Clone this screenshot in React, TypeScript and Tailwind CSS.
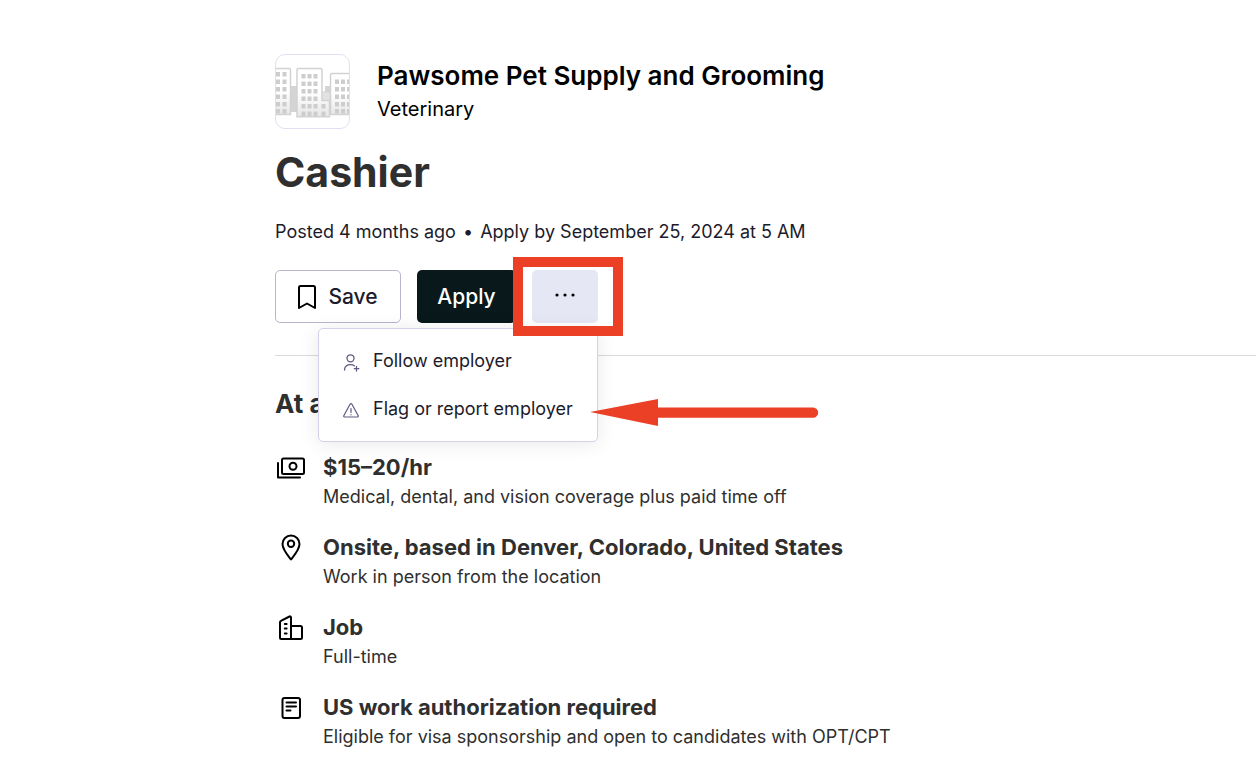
import { useState, type ReactNode } from "react";

const details = [
  { icon: "pay", title: "$15–20/hr", text: "Medical, dental, and vision coverage plus paid time off" },
  { icon: "pin", title: "Onsite, based in Denver, Colorado, United States", text: "Work in person from the location" },
  { icon: "job", title: "Job", text: "Full-time" },
  { icon: "doc", title: "US work authorization required", text: "Eligible for visa sponsorship and open to candidates with OPT/CPT" },
] as const;

const icons: Record<(typeof details)[number]["icon"], ReactNode> = {
  pay: (
    <>
      <rect x="7" y="5.5" width="22" height="15.5" rx="1.5" />
      <circle cx="18" cy="13.2" r="3.5" />
      <path d="M3 10v14.5h22" />
    </>
  ),
  pin: (
    <>
      <path d="M16 26.5C12.5 22 7.5 16.5 7.5 11a8.5 8.5 0 0 1 17 0c0 5.5-5 11-8.5 15.5Z" />
      <circle cx="16" cy="10.7" r="3.2" />
    </>
  ),
  job: (
    <>
      <path d="M5 25V9.2a1.5 1.5 0 0 1 .9-1.400l8.6-4.300a1 1 0 0 1 1.5.9V26H6a1 1 0 0 1-1-1Z" />
      <path d="M16 13h9.5a1.5 1.5 0 0 1 1.5 1.5v10a1.5 1.5 0 0 1-1.500 1.5H16" />
      <path d="M9.800 11h1.800M9.800 15.500h1.800M9.800 20.500h1.800" />
    </>
  ),
  doc: (
    <>
      <rect x="7.5" y="5" width="17.5" height="20" rx="2" />
      <path d="M11.500 9.500h9.500M11.500 13.500h9.500M11.500 17.500h4" />
    </>
  ),
};

function DetailIcon({ name }: { name: keyof typeof icons }) {
  return (
    <svg className="h-[30px] w-8 shrink-0 text-black" viewBox="0 0 32 30" fill="none" stroke="currentColor" strokeWidth="2" strokeLinejoin="round" strokeLinecap="round" aria-hidden="true">
      {icons[name]}
    </svg>
  );
}

function Windows({ xs, ys }: { xs: number[]; ys: number[] }) {
  return (
    <g fill="#cdcdcd">
      {ys.map((y) => xs.map((x) => <rect key={`${x}-${y}`} x={x} y={y} width="4" height="4.5" />))}
    </g>
  );
}

function EmployerLogo() {
  return (
    <div className="size-[75px] shrink-0 overflow-hidden rounded-[10px] border border-[#e0e0f2] bg-white">
      <svg className="size-full" viewBox="1 1 73 73" role="img" aria-label="Employer logo">
        <defs>
          <linearGradient id="wall" x1="0" y1="0" x2="0" y2="1">
            <stop offset="0.5" stopColor="#fff" />
            <stop offset="1" stopColor="#e6e6e6" />
          </linearGradient>
        </defs>
        <path d="M15 32h8v26h-8zM50 32h6v8h-6z" fill="#d4d4d4" />
        <path d="M45 38h14v22H45z" fill="#e2e2e2" stroke="#d2d2d2" />
        <g fill="url(#wall)" stroke="#d2d2d2" strokeWidth="1.5">
          <path d="M-2 14.500H14q1.500 0 1.500 1.500v44.500H-2z" />
          <path d="M77 19.500H57q-1.500 0-1.500 1.500v39.500H77z" />
          <path d="M22 62.700V16q0-1.500 1.500-1.500h22q1.500 0 1.500 1.500v30.500h7.500v16.200z" />
        </g>
        <Windows xs={[1, 7.5]} ys={[18, 25.5, 33, 40.5, 48, 55]} />
        <Windows xs={[26.5, 32.5, 38.5]} ys={[20, 27.5, 35, 42.5, 50, 57.5]} />
        <Windows xs={[46.5]} ys={[50, 57.5]} />
        <Windows xs={[60, 66, 72]} ys={[25.5, 33, 40.5, 48, 55]} />
      </svg>
    </div>
  );
}

function MoreMenu() {
  return (
    <div className="absolute top-full right-0 z-10 mt-[5px] flex w-[280px] flex-col rounded-[5px] border border-[#d3d1ea] bg-white py-2 shadow-[0_2px_20px_rgba(0,0,0,0.09)]" role="menu">
      <button type="button" role="menuitem" className="flex h-12 items-center gap-3 px-6 text-left text-lg whitespace-nowrap text-[#1c1b2b]">
        <svg className="mt-1 size-[18px] shrink-0 text-[#5d5a80]" viewBox="0 0 18 18" fill="none" stroke="currentColor" strokeWidth="1.3" strokeLinecap="round" aria-hidden="true">
          <circle cx="7.5" cy="4.3" r="3.5" />
          <path d="M1.500 16c0-3.500 2.500-5.300 6-5.300 1.700 0 3 .4 4 1.200M13.500 12.500v4.500M11.300 14.700h4.500" />
        </svg>
        Follow employer
      </button>
      <button type="button" role="menuitem" className="flex h-12 items-center gap-3 px-6 text-left text-lg whitespace-nowrap text-[#1c1b2b]">
        <svg className="mt-1 size-[18px] shrink-0 text-[#5d5a80]" viewBox="0 0 18 18" fill="none" stroke="currentColor" strokeWidth="1.2" strokeLinecap="round" strokeLinejoin="round" aria-hidden="true">
          <path d="M6.900 2.500.900 13.500q-.6 1.300.8 1.500h12.600q1.400-.2.8-1.500L9.100 2.500q-1.100-1.600-2.200 0ZM8 6.500v4M8 12.600v.2" />
        </svg>
        Flag or report employer
      </button>
    </div>
  );
}

export default function App() {
  const [open, setOpen] = useState(true);
  const [saved, setSaved] = useState(false);

  return (
    <main className="min-h-screen overflow-x-hidden bg-white pt-[54px] pb-6 pl-[275px] font-['Inter','Liberation_Sans',sans-serif] text-[#2f2f2f]">
      <header className="flex gap-[27px] text-black">
        <EmployerLogo />
        <div className="pt-1">
          <p className="text-[26px] leading-9 font-semibold">Pawsome Pet Supply and Grooming</p>
          <p className="text-xl leading-[30px]">Veterinary</p>
        </div>
      </header>

      <h1 className="mt-5 text-[41px] leading-[46px] font-bold">Cashier</h1>
      <p className="mt-[23px] text-lg leading-7 text-[#1c1b2b]">
        Posted 4 months ago <span className="mx-0.5">•</span> Apply by September 25, 2024 at 5 AM
      </p>

      <div className="relative mt-6 flex w-fit gap-4">
        <button type="button" aria-pressed={saved} onClick={() => setSaved(!saved)} className="flex h-[53px] w-[126px] items-center justify-center gap-3 rounded-[5px] border border-[#b7b5d0] bg-white text-[21px] font-medium text-[#1c1b2b]">
          <svg className="h-6 w-[18px] text-black" viewBox="0 0 18 24" fill={saved ? "currentColor" : "none"} stroke="currentColor" strokeWidth="2" strokeLinejoin="round" aria-hidden="true">
            <path d="M1 2.500Q1 1 2.500 1h13Q17 1 17 2.500V23l-8-4.500L1 23Z" />
          </svg>
          Save
        </button>
        <button type="button" className="h-[53px] w-[99px] rounded-[5px] bg-[#09191b] text-[21px] font-medium text-white">Apply</button>
        <div className="relative">
          <button type="button" aria-label="More options" aria-expanded={open} onClick={() => setOpen(!open)} className="flex h-[53px] w-[66px] items-center justify-center rounded-[5px] bg-[#e5e7f5] pb-1 text-black">
            <svg className="h-1 w-5" viewBox="0 0 20 4" fill="currentColor" aria-hidden="true">
              <circle cx="2" cy="2" r="1.6" />
              <circle cx="10" cy="2" r="1.6" />
              <circle cx="18" cy="2" r="1.6" />
            </svg>
          </button>
          <div className="pointer-events-none absolute -top-[13px] -right-[25px] -bottom-[13px] -left-[19px] z-20 border-10 border-[#eb4026]" />
          {open && <MoreMenu />}
        </div>
        {open && (
          <svg className="pointer-events-none absolute top-[128px] left-[315px] z-20 h-7 w-[230px]" viewBox="0 0 230 28" fill="#eb4026" aria-hidden="true">
            <path d="M0 14 68 1v8.400h155a5.200 5.200 0 0 1 0 10.400H68V28Z" />
          </svg>
        )}
      </div>

      <section className="mt-8 border-t border-[#d9d9de]">
        <h2 className="mt-8 text-[26px] leading-8 font-bold">At a glance</h2>
        <ul className="mt-[33px] flex flex-col gap-[22px]">
          {details.map((item) => (
            <li key={item.title} className="flex gap-4">
              <DetailIcon name={item.icon} />
              <div>
                <h3 className="text-[22px] leading-[29px] font-bold">{item.title}</h3>
                <p className="text-lg leading-[29px]">{item.text}</p>
              </div>
            </li>
          ))}
        </ul>
      </section>
    </main>
  );
}
